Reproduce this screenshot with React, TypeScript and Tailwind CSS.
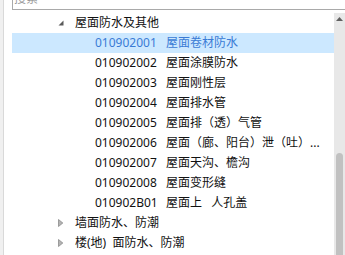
const items = [
  { code: "010902001", name: "屋面卷材防水", selected: true },
  { code: "010902002", name: "屋面涂膜防水" },
  { code: "010902003", name: "屋面刚性层" },
  { code: "010902004", name: "屋面排水管" },
  { code: "010902005", name: "屋面排（透）气管" },
  { code: "010902006", name: "屋面（廊、阳台）泄（吐）..." },
  { code: "010902007", name: "屋面天沟、檐沟" },
  { code: "010902008", name: "屋面变形缝" },
  { code: "010902B01", name: "屋面上   人孔盖" },
]

function Expanded() {
  return (
    <svg width="6" height="6" viewBox="0 0 6 6" className="block">
      <path d="M5.5 0.5 L5.5 5.5 L0.5 5.5 Z" fill="#5a5a5a" />
    </svg>
  )
}

function Collapsed() {
  return (
    <svg width="6" height="8" viewBox="0 0 6 8" className="block">
      <path d="M0.5 0.5 L4.8 4 L0.5 7.5 Z" fill="#b4b4b4" stroke="#8c8c8c" strokeWidth="0.8" />
    </svg>
  )
}

function GroupRow({ label, open }: { label: string; open?: boolean }) {
  return (
    <div className="h-[20px] flex items-center shrink-0">
      <div className="w-[63px] flex justify-end pr-[11px]">{open ? <Expanded /> : <Collapsed />}</div>
      <span className="whitespace-pre text-[#111111]">{label}</span>
    </div>
  )
}

export default function App() {
  return (
    <div
      className="w-[345px] h-[255px] overflow-hidden bg-white flex text-[12px] leading-[16px]"
      style={{ fontFamily: '"Noto Sans", "Noto Sans CJK SC", sans-serif' }}
    >
      <div className="w-[4px] bg-[#f0f0f0] border-r border-[#d9d9d9] shrink-0" />
      <div className="flex-1 flex flex-col pl-[8px] min-w-0">
        {/* Search */}
        <div className="-mt-[12px] h-[22px] border border-[#a9a9a9] border-r-0 flex items-center pl-[1px] shrink-0">
          <span className="text-[#9a9a9a]">搜索</span>
        </div>

        <div className="mt-[3px] flex-1 flex min-h-0">
          {/* Tree */}
          <div className="flex-1 flex flex-col min-w-0">
            <GroupRow label="屋面防水及其他" open />
            {items.map((it) => (
              <div
                key={it.code}
                className={`h-[20px] flex items-center shrink-0 pl-[83px] ${
                  it.selected ? "bg-[#cce8ff] text-[#3a7bd5]" : "text-[#111111]"
                }`}
              >
                <span className="w-[71px] shrink-0 whitespace-nowrap">{it.code}</span>
                <span className="whitespace-pre">{it.name}</span>
              </div>
            ))}
            <GroupRow label="墙面防水、防潮" />
            <GroupRow label="楼(地)  面防水、防潮" />
          </div>

          {/* Scrollbar */}
          <div className="w-[11px] bg-[#e8e8e8] flex flex-col shrink-0">
            <div className="h-[12px] flex items-center justify-center shrink-0">
              <svg width="7" height="4" viewBox="0 0 7 4" className="block">
                <path d="M3.5 0 L7 4 L0 4 Z" fill="#606060" />
              </svg>
            </div>
            <div className="mt-[128px] flex-1 ml-[2px] w-[7px] bg-[#c1c1c1] rounded-t-[4px]" />
          </div>
        </div>
      </div>
    </div>
  )
}
